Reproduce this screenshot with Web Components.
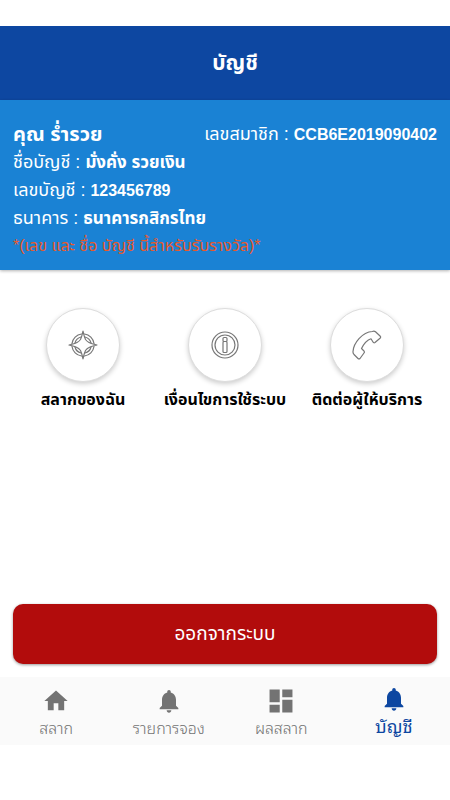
<!DOCTYPE html>
<html lang="th">
<head>
<meta charset="utf-8">
<meta name="viewport" content="width=device-width, initial-scale=1">
<title>บัญชี</title>
<style>
  body {
    margin: 0;
    background: #fff;
    font-family: "Liberation Sans", "Noto Sans Thai", "Noto Sans", sans-serif;
  }
</style>
</head>
<body>
<account-page></account-page>

<script>
const define = (name, html) => {
  const template = document.createElement('template');
  template.innerHTML = html;

  customElements.define(name, class extends HTMLElement {
    constructor() {
      super();
      this.attachShadow({ mode: 'open' });
      this.shadowRoot.appendChild(template.content.cloneNode(true));
    }
  });
};

define('app-header', `
  <style>
    :host {
      display: flex;
      align-items: center;
      justify-content: center;
      height: 74px;
      padding-left: 20px;
      background: #0d47a1;
      color: #fff;
    }

    h1 {
      margin: 0;
      font-size: 21px;
      line-height: 28px;
    }
  </style>
  <h1><slot></slot></h1>
`);

define('info-row', `
  <style>
    :host {
      display: flex;
      align-items: baseline;
      height: 28px;
      font-size: 18px;
      line-height: 28px;
      white-space: pre;
    }

    ::slotted(b) {
      font-size: 17px;
      font-weight: 700;
    }

    :host([code]) ::slotted(b) {
      font-size: 16px;
    }
  </style>
  <slot></slot>
`);

define('account-card', `
  <style>
    :host {
      display: block;
      padding: 20px 13px 10px;
      background: #1a82d4;
      color: #fff;
      box-shadow: 0 1px 3px rgba(0, 0, 0, 0.3);
    }

    .top {
      display: flex;
      justify-content: space-between;
    }

    h2 {
      margin: 0;
      font-size: 20px;
      line-height: 28px;
    }

    p {
      margin: 0;
      color: #e8592b;
      font-size: 16px;
      line-height: 28px;
    }
  </style>
  <div class="top">
    <h2><slot name="name"></slot></h2>
    <slot name="member"></slot>
  </div>
  <slot></slot>
  <p><slot name="note"></slot></p>
`);

define('round-action', `
  <style>
    :host {
      display: block;
      flex: 1 1 0;
      min-width: 0;
    }

    button {
      all: unset;
      box-sizing: border-box;
      cursor: pointer;
      display: flex;
      flex-direction: column;
      align-items: center;
      gap: 4px;
      width: 100%;
      color: #000;
      font-size: 16px;
      font-weight: 700;
      line-height: 28px;
      white-space: nowrap;
    }

    .circle {
      display: grid;
      place-items: center;
      box-sizing: border-box;
      width: 74px;
      height: 74px;
      border: 1px solid #ddd;
      border-radius: 50%;
      background: #fff;
      box-shadow: 0 2px 5px rgba(0, 0, 0, 0.2);
    }
  </style>
  <button type="button">
    <span class="circle"><slot name="icon"></slot></span>
    <span><slot></slot></span>
  </button>
`);

define('logout-button', `
  <style>
    :host {
      display: block;
      margin: 0 13px 13px;
    }

    button {
      display: block;
      width: 100%;
      height: 60px;
      border: 0;
      border-radius: 10px;
      background: #b20c0c;
      color: #fff;
      font: inherit;
      font-size: 19px;
      cursor: pointer;
      box-shadow: 0 1px 3px rgba(0, 0, 0, 0.4);
    }
  </style>
  <button type="button"><slot></slot></button>
`);

define('nav-item', `
  <style>
    :host {
      display: block;
      flex: 1 1 0;
      color: #737373;
      font-size: 16px;
      font-weight: 300;
    }

    :host([active]) {
      color: #0d47a1;
      font-size: 18px;
      font-weight: 400;
    }

    a {
      display: flex;
      flex-direction: column;
      align-items: center;
      padding-top: 10px;
      color: inherit;
      text-decoration: none;
      line-height: 24px;
    }

    :host([active]) a {
      padding-top: 8px;
    }
  </style>
  <a href="#"><slot name="icon"></slot><span><slot></slot></span></a>
`);

define('bottom-nav', `
  <style>
    :host {
      display: block;
      background: #fafafa;
      font-family: "Noto Sans Thai Looped", "Noto Looped Thai", Loma, Waree, "Noto Sans Thai", "Noto Sans", "Liberation Sans", sans-serif;
    }

    nav {
      display: flex;
      height: 68px;
    }
  </style>
  <nav><slot></slot></nav>
`);

define('account-page', `
  <style>
    :host {
      display: flex;
      flex-direction: column;
      box-sizing: border-box;
      min-height: 100vh;
      padding: 26px 0 55px;
    }

    main {
      display: flex;
      flex: 1;
      flex-direction: column;
    }

    .actions {
      display: flex;
      flex: 1;
      align-items: flex-start;
      padding: 38px 12px 20px;
    }

    .line {
      fill: none;
      stroke: #777;
      stroke-width: 1.2;
      stroke-linejoin: round;
      stroke-linecap: round;
    }

    .solid {
      display: block;
      fill: currentColor;
    }
  </style>
  <app-header>บัญชี</app-header>
  <main>
    <account-card>
      <span slot="name">คุณ ร่ำรวย</span>
      <info-row slot="member" code>เลขสมาชิก : <b>CCB6E2019090402</b></info-row>
      <info-row>ชื่อบัญชี : <b>มั่งคั่ง รวยเงิน</b></info-row>
      <info-row code>เลขบัญชี : <b>123456789</b></info-row>
      <info-row>ธนาคาร : <b>ธนาคารกสิกรไทย</b></info-row>
      <span slot="note">*(เลข และ ชื่อ บัญชี นี้สำหรับรับรางวัล)*</span>
    </account-card>
    <div class="actions">
      <round-action>
        <svg slot="icon" class="line" width="30" height="30" viewBox="0 0 30 30" aria-hidden="true">
          <path d="M15 1C15.800 5 16.500 7.500 17.500 9.500Q19 11.500 21 12.500C23 13.700 25.500 14.300 29 15C25.500 15.700 23 16.300 21 17.500Q19 18.500 17.500 20.500C16.500 22.500 15.800 25 15 29C14.200 25 13.500 22.500 12.500 20.500Q11 18.500 9 17.500C7 16.300 4.500 15.700 1 15C4.500 14.300 7 13.700 9 12.500Q11 11.500 12.500 9.500C13.500 7.500 14.200 5 15 1Z"/>
          <path d="M16.500 4A11.200 11.200 0 0 1 26 13.500M26 16.500A11.200 11.200 0 0 1 16.500 26M13.500 26A11.200 11.200 0 0 1 4 16.500M4 13.500A11.200 11.200 0 0 1 13.500 4"/>
          <path d="M17 7A8.300 8.300 0 0 1 23 13M23 17A8.300 8.300 0 0 1 17 23M13 23A8.300 8.300 0 0 1 7 17M7 13A8.300 8.300 0 0 1 13 7"/>
        </svg>
        สลากของฉัน
      </round-action>
      <round-action>
        <svg slot="icon" class="line" width="28" height="28" viewBox="0 0 28 28" aria-hidden="true">
          <circle cx="14" cy="14" r="13"/>
          <circle cx="14" cy="14" r="10"/>
          <rect x="12" y="6.500" width="4" height="4" rx="1"/>
          <rect x="12" y="10.500" width="4" height="11" rx="1"/>
        </svg>
        เงื่อนไขการใช้ระบบ
      </round-action>
      <round-action>
        <svg slot="icon" class="line" width="30" height="30" viewBox="0 0 30 30" aria-hidden="true">
          <path d="M20.500 1.500Q22 .5 23.500 1.800L28.300 6.300Q29 7 28.300 8L23 12.500Q21.800 13.300 21 12L19 8.800Q13.500 10.500 9.500 18.500L12 21Q12.800 22 12 23L8 28.500Q7 29.500 6 28.500L2 24.500Q.8 23 1 21.500C1.500 13.500 10 2 20.500 1.500Z"/>
        </svg>
        ติดต่อผู้ให้บริการ
      </round-action>
    </div>
    <logout-button>ออกจากระบบ</logout-button>
  </main>
  <bottom-nav>
    <nav-item>
      <svg slot="icon" class="solid" width="28" height="28" viewBox="0 0 24 24" aria-hidden="true"><path d="M10 20v-6h4v6h5v-8h3L12 3 2 12h3v8z"/></svg>
      สลาก
    </nav-item>
    <nav-item>
      <svg slot="icon" class="solid" width="28" height="28" viewBox="0 0 24 24" aria-hidden="true"><path d="M12 22c1.100 0 2-.9 2-2h-4c0 1.100.9 2 2 2zm6-6v-5c0-3.070-1.640-5.640-4.500-6.320V4c0-.83-.67-1.500-1.500-1.500s-1.500.67-1.500 1.500v.68C7.630 5.360 6 7.920 6 11v5l-2 2v1h16v-1z"/></svg>
      รายการจอง
    </nav-item>
    <nav-item>
      <svg slot="icon" class="solid" width="28" height="28" viewBox="1 1 22 22" aria-hidden="true"><path d="M3 13h8V3H3zm0 8h8v-6H3zm10 0h8V11h-8zm0-18v6h8V3z"/></svg>
      ผลสลาก
    </nav-item>
    <nav-item active>
      <svg slot="icon" class="solid" width="28" height="28" viewBox="0 0 24 24" aria-hidden="true"><path d="M12 22c1.100 0 2-.9 2-2h-4c0 1.100.9 2 2 2zm6-6v-5c0-3.070-1.640-5.640-4.500-6.320V4c0-.83-.67-1.500-1.500-1.500s-1.500.67-1.500 1.500v.68C7.630 5.360 6 7.920 6 11v5l-2 2v1h16v-1z"/></svg>
      บัญชี
    </nav-item>
  </bottom-nav>
`);
</script>
</body>
</html>
